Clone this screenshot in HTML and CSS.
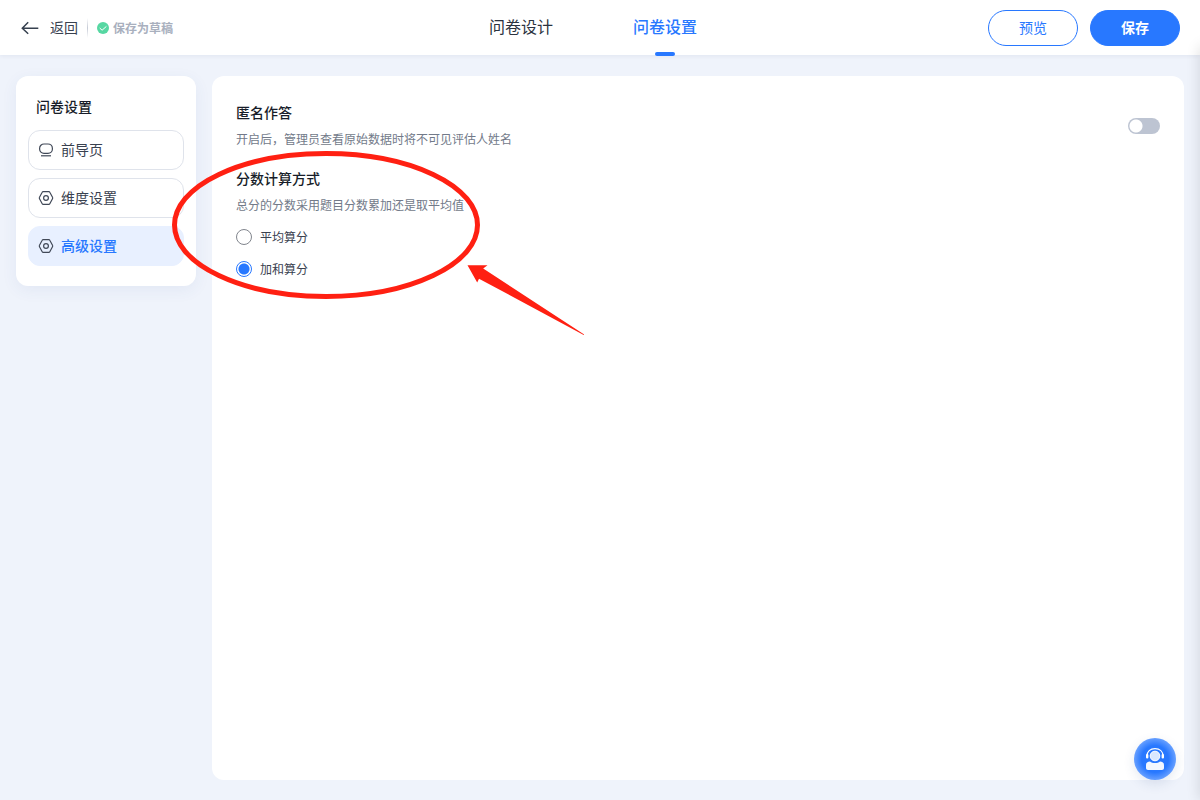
FILE: index.html
```html
<!DOCTYPE html>
<html lang="zh-CN">
<head>
<meta charset="utf-8">
<meta name="viewport" content="width=device-width, initial-scale=1">
<title>问卷设置</title>
<link rel="stylesheet" href="styles.css">
</head>
<body>
<div class="app">
  <header class="topbar">
    <div class="topbar-left">
      <a class="back" href="#">
        <svg width="20" height="16" viewBox="0 0 20 16" fill="none" stroke="#36404f" stroke-width="1.5"><path d="M8.2 2.3 2.3 8.2l5.9 5.6M2.5 8.2h15.8"/></svg>
        <span class="label">返回</span>
      </a>
      <div class="draft">
        <svg width="12" height="12" viewBox="0 0 12 12"><circle cx="6" cy="6" r="6" fill="#56d7a2"/><path d="m2.7 6 2.4 2.2 4.3-3.8" fill="none" stroke="#fff"/></svg>
        <span>保存为草稿</span>
      </div>
    </div>
    <nav class="tabs">
      <a class="tab" href="#">问卷设计</a>
      <a class="tab tab-active" href="#">问卷设置</a>
    </nav>
    <div class="actions">
      <button class="btn" type="button">预览</button>
      <button class="btn btn-primary" type="button">保存</button>
    </div>
  </header>

  <div class="content">
    <aside class="sidebar">
      <h2 class="sidebar-title">问卷设置</h2>
      <nav class="menu">
        <a class="menu-item" href="#">
          <svg class="menu-icon" viewBox="0 0 16 16"><rect x="1.6" y="2" width="12.8" height="9.4" rx="4.4"/><path d="M3 13.8h10"/></svg>
          <span class="label">前导页</span>
        </a>
        <a class="menu-item" href="#">
          <svg class="menu-icon" viewBox="0 0 16 16"><path d="M5.200 1.700h5.600q.7 0 1 .6L14.500 7.300q.4.700 0 1.400l-2.700 5q-.3.600-1 .6H5.200q-.7 0-1-.6L1.500 8.700q-.4-.7 0-1.400l2.700-5q.3-.6 1-.6z"/><circle cx="8" cy="8" r="2.4"/></svg>
          <span class="label">维度设置</span>
        </a>
        <a class="menu-item menu-item-active" href="#">
          <svg class="menu-icon" viewBox="0 0 16 16"><path d="M5.200 1.700h5.600q.7 0 1 .6L14.500 7.300q.4.700 0 1.400l-2.700 5q-.3.600-1 .6H5.200q-.7 0-1-.6L1.500 8.700q-.4-.7 0-1.400l2.700-5q.3-.6 1-.6z"/><circle cx="8" cy="8" r="2.4"/></svg>
          <span class="label">高级设置</span>
        </a>
      </nav>
    </aside>

    <main class="panel">
      <section class="setting setting-row">
        <div>
          <h3 class="setting-title" id="anon-title">匿名作答</h3>
          <p class="setting-note">开启后，管理员查看原始数据时将不可见评估人姓名</p>
        </div>
        <input class="switch" type="checkbox" role="switch" aria-labelledby="anon-title">
      </section>
      <section class="setting">
        <h3 class="setting-title" id="score-title">分数计算方式</h3>
        <p class="setting-note">总分的分数采用题目分数累加还是取平均值</p>
        <div class="options" role="radiogroup" aria-labelledby="score-title">
          <label class="option"><input class="radio" type="radio" name="score"><span>平均算分</span></label>
          <label class="option"><input class="radio" type="radio" name="score" checked><span>加和算分</span></label>
        </div>
      </section>
    </main>
  </div>

  <svg class="markup" width="420" height="200" viewBox="170 145 420 200" aria-hidden="true">
    <ellipse cx="326" cy="225" rx="151.5" ry="71.5" fill="none" stroke="#ff2012" stroke-width="5"/>
    <path d="M467.5 265.3h20l-4.3 3.2 101 66-.5.5L479 278.7l-1.8 3.8z" fill="#ff2012"/>
  </svg>

  <div class="drawer-edge"></div>

  <button class="support" type="button" aria-label="客服">
    <svg width="22" height="24" viewBox="0 0 22 24">
      <path d="M3 9C3 4.500 6.200 1.600 11 1.600S19 4.500 19 9" fill="none" stroke="#fff" stroke-width="1.200"/>
      <rect x="2" y="7" width="2.400" height="4.600" rx="1.100" fill="#fff"/>
      <rect x="17.600" y="7" width="2.400" height="4.600" rx="1.100" fill="#fff"/>
      <circle cx="11" cy="9" r="4.800" fill="#d9e8ff" stroke="#fff"/>
      <path d="M2 18.500c0-2.800 1.300-4.100 4-4.100 1.300 1 3 1.500 5 1.500s3.700-.5 5-1.500c2.700 0 4 1.300 4 4.100V21c0 1.200-.8 2-2 2H4c-1.200 0-2-.8-2-2z" fill="#f2f7ff"/>
    </svg>
  </button>
</div>
</body>
</html>
```
FILE: styles.css
```css
* {
  box-sizing: border-box;
}

body {
  margin: 0;
  color: #39414f;
  background: #eff3fb;
  font: 14px/20px "Noto Sans CJK SC", sans-serif;
}

a {
  color: inherit;
  text-decoration: none;
}

h2,
h3,
p {
  margin: 0;
}

button {
  font: inherit;
  cursor: pointer;
}

.app {
  display: flex;
  flex-direction: column;
  min-height: 100vh;
  position: relative;
  overflow: hidden;
}

.label {
  padding-bottom: 2px;
}

.topbar {
  display: grid;
  grid-template-columns: 1fr auto 1fr;
  align-items: center;
  height: 55px;
  padding: 0 20px 0 6px;
  background: #fff;
  box-shadow: 0 1px 4px rgba(40, 60, 100, 0.07);
}

.topbar-left {
  display: flex;
  align-items: center;
  gap: 9px;
  padding-left: 14px;
}

.back {
  display: flex;
  align-items: center;
  gap: 10px;
}

.draft {
  display: flex;
  align-items: center;
  gap: 4px;
  padding-left: 10px;
  color: #a9b0be;
  font-size: 12px;
  font-weight: 700;
  background: linear-gradient(#fff, #c5cad5, #fff) left / 1px 100% no-repeat;
}

.tabs {
  display: flex;
  gap: 80px;
  height: 55px;
}

.tab {
  position: relative;
  padding-bottom: 2px;
  color: #2b3340;
  font-size: 16px;
  line-height: 53px;
}

.tab-active {
  color: #2878ff;
  font-weight: 500;
}

.tab-active::after {
  content: "";
  position: absolute;
  left: 50%;
  bottom: -1px;
  width: 20px;
  height: 4px;
  margin-left: -10px;
  border-radius: 2px;
  background: #2878ff;
}

.actions {
  display: flex;
  justify-content: flex-end;
  gap: 12px;
}

.btn {
  width: 90px;
  height: 36px;
  padding: 0 0 2px;
  border: 1px solid #2878ff;
  border-radius: 18px;
  color: #2878ff;
  background: #fff;
}

.btn-primary {
  color: #fff;
  font-weight: 700;
  background: #2878ff;
}

.content {
  display: flex;
  flex: 1;
  gap: 16px;
  padding: 21px 16px 20px;
}

.sidebar {
  align-self: flex-start;
  width: 180px;
  padding: 20px 12px;
  border-radius: 12px;
  background: #fff;
  box-shadow: 0 4px 16px rgba(60, 90, 150, 0.07);
}

.sidebar-title {
  padding: 0 8px 14px;
  color: #171d29;
  font-size: 14px;
  font-weight: 500;
}

.menu {
  display: flex;
  flex-direction: column;
  gap: 8px;
}

.menu-item {
  display: flex;
  align-items: center;
  gap: 7px;
  height: 40px;
  padding: 0 9px;
  border: 1px solid #dfe3eb;
  border-radius: 12px;
}

.menu-item-active {
  border-color: #e8f0ff;
  color: #2878ff;
  font-weight: 500;
  background: #e8f0ff;
}

.menu-icon {
  width: 16px;
  height: 16px;
  fill: none;
  stroke: #414958;
  stroke-width: 1.2;
}

.panel {
  display: flex;
  flex: 1;
  flex-direction: column;
  gap: 19px;
  padding: 26px 24px;
  border-radius: 12px;
  background: #fff;
}

.setting-row {
  display: flex;
  align-items: center;
  justify-content: space-between;
}

.setting-title {
  color: #171d29;
  font-size: 14px;
  font-weight: 500;
}

.setting-note {
  padding-top: 7px;
  color: #727a89;
  font-size: 12px;
}

.switch {
  appearance: none;
  width: 32px;
  height: 16px;
  margin: 0;
  border-radius: 8px;
  background: radial-gradient(circle at 8px 8px, #fff 6px, #bdc4d2 7px);
}

.options {
  display: flex;
  flex-direction: column;
  align-items: flex-start;
  gap: 12px;
  padding-top: 12px;
}

.option {
  display: flex;
  align-items: center;
  gap: 8px;
  font-size: 12px;
}

.radio {
  appearance: none;
  width: 16px;
  height: 16px;
  margin: 0;
  border: 1px solid #81858d;
  border-radius: 50%;
}

.radio:checked {
  border-color: #2878ff;
  background: radial-gradient(circle, #2878ff 5px, #fff 6px);
}

.markup {
  position: absolute;
  left: 170px;
  top: 145px;
  pointer-events: none;
}

.drawer-edge {
  position: absolute;
  top: 46px;
  right: -10px;
  bottom: 0;
  width: 10px;
  box-shadow: 0 0 14px rgba(0, 0, 0, 0.15);
}

.support {
  display: grid;
  place-items: center;
  position: absolute;
  right: 24px;
  bottom: 20px;
  width: 42px;
  height: 42px;
  padding: 0;
  border: 0;
  border-radius: 50%;
  background: radial-gradient(circle, #2878ff 45%, #6ba2ff 72%);
  box-shadow: 0 4px 12px rgba(40, 70, 130, 0.12);
}
```
